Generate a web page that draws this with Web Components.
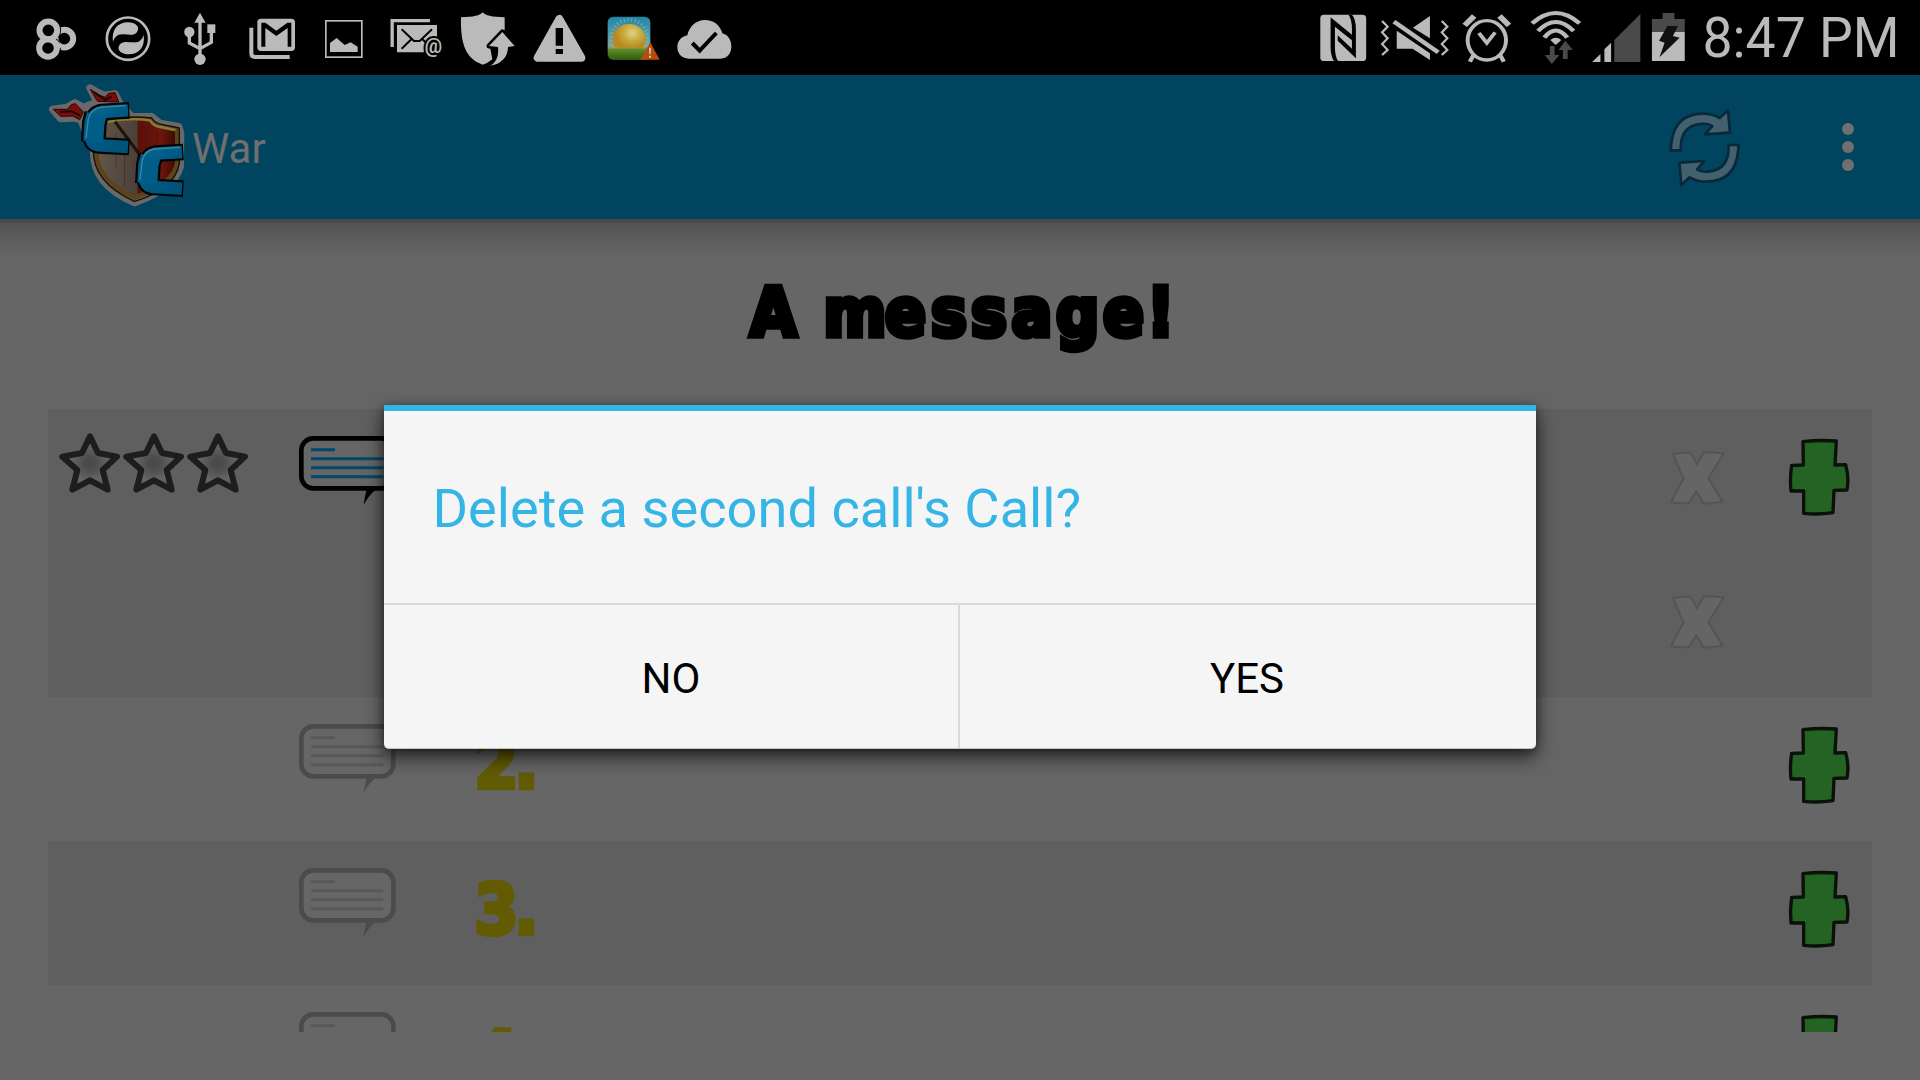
<!DOCTYPE html>
<html lang="en"><head><meta charset="utf-8"><title>War</title>
<style>
html,body{margin:0;height:100%;overflow:hidden;background:#666}
body{font-family:Roboto,sans-serif}
</style></head><body>
<war-app></war-app>
<script>
const G='#bababa', D='#4a4a4a';
const define=(name,html)=>customElements.define(name,class extends HTMLElement{
  constructor(){super();const t=document.createElement('template');t.innerHTML=typeof html==='function'?html(this):html;
  this.attachShadow({mode:'open'}).append(t.content.cloneNode(true));}
});

/* name: [viewBox, width, height, markup] */
const icons={
rings:['90 0 180 225',60,75,`<g fill="none" stroke="${G}" stroke-width="18"><circle cx="193" cy="116" r="26.500"/><circle cx="144" cy="144" r="31" stroke="#000" stroke-width="15"/><circle cx="144" cy="144" r="26.500"/><path d="M165 127L181 144" stroke-width="17"/><path d="M122 112A31 31 0 1 1 170 110" stroke="#000" stroke-width="14"/><circle cx="145" cy="91" r="26.500"/></g>`],
swirl:['270 0 230 225',76.667,75,`<g fill="${G}"><circle cx="384" cy="116" r="63.500" fill="none" stroke="${G}" stroke-width="8"/><path d="M339 126C334 90 352 67 384 67C406 67 419 80 413 92C407 107 390 105 372 103C352 101 343 112 339 126Z"/><path transform="rotate(180 385 115)" d="M339 126C334 90 352 67 384 67C406 67 419 80 413 92C407 107 390 105 372 103C352 101 343 112 339 126Z"/></g>`],
usb:['500 0 200 225',66.667,75,`<g fill="${G}"><path d="M599 38L616 68H582Z"/><circle cx="599" cy="178" r="17"/><circle cx="567" cy="96" r="15.500"/><path d="M621 73H645V99H621Z"/><path d="M599 64V180M567 100V129L599 146L633 127V97" fill="none" stroke="${G}" stroke-width="10"/></g>`],
mail:['700 0 230 225',76.667,75,`<path d="M755 83V160Q755 171 766 171H870" fill="none" stroke="${G}" stroke-width="12"/><rect x="773" y="56" width="113" height="97" rx="11" fill="${G}"/><path d="M785 140V68H797L830 92L863 68H875V140H864V84L830 108L797 84V140Z"/>`],
photo:['930 0 210 225',70,75,`<rect x="977.500" y="62.500" width="108" height="109" fill="none" stroke="${G}" stroke-width="5"/><path fill="${G}" d="M990 156V129L1010 114L1034 135L1052 127L1073 140V156Z"/>`],
letter:['30 0 210 225',70,75,`<path d="M66.500 141V62H180" fill="none" stroke="${G}" stroke-width="10"/><path fill="${G}" d="M81 75H201V157H81Z"/><path d="M95 88L132 123H149L186 88M95 146L124 118M157 118L175 134" fill="none" stroke="#000" stroke-width="6"/><text x="190" y="160" text-anchor="middle" font-family="Roboto" font-weight="700" font-size="58" fill="${G}" stroke="#000" stroke-width="12" paint-order="stroke">@</text>`],
shield:['240 0 220 225',73.333,75,`<path fill="${G}" d="M338 37Q348 51 404 52V90L360 140L367 178Q352 191 338 194C286 176 271 130 273 52Q328 51 338 37Z"/><path fill="${G}" stroke="#000" stroke-width="15" paint-order="stroke" stroke-linejoin="round" d="M397 96L434 138L414 141C414 170 395 192 362 197C382 182 386 165 384 141L357 138Z"/>`],
warn:['460 0 220 225',73.333,75,`<path fill="${G}" stroke="${G}" stroke-width="24" stroke-linejoin="round" d="M569 57L504 173H635Z"/><path d="M558 84H580V137H558ZM558 147H580V162H558Z"/>`],
sun:['680 0 210 225',70,75,`<defs><linearGradient id="a" x2="0" y2="1"><stop stop-color="#1f86a6"/><stop offset=".6" stop-color="#6ba4b0"/><stop offset=".7" stop-color="#94a37c"/><stop offset=".76" stop-color="#5f8a24"/><stop offset="1" stop-color="#2d5d12"/></linearGradient><radialGradient id="b" cx=".6" cy=".3"><stop stop-color="#ddd38a"/><stop offset=".55" stop-color="#c9a93c"/><stop offset="1" stop-color="#b98a1f"/></radialGradient><clipPath id="c"><path d="M713 40H850V147Q780 138 713 147Z"/></clipPath></defs><rect x="712" y="50" width="128" height="130" rx="17" fill="url(#a)"/><g clip-path="url(#c)"><circle cx="777" cy="112" r="53" fill="none" stroke="#a9c5b0" stroke-width="11" stroke-dasharray="4 7" opacity=".45"/><ellipse cx="776" cy="117" rx="50" ry="45" fill="url(#b)"/></g><path fill="#b84a0a" d="M840 127L868 179H810Z"/><path fill="#ccc" d="M836 143H842L841 163H837ZM836 167H842V173H836Z"/>`],
cloud:['890 0 220 225',73.333,75,`<path fill="${G}" d="M955 176H1050C1072 176 1083 160 1083 139C1083 118 1071 104 1056 100C1049 75 1030 60 1004 60C977 60 957 79 951 106C932 110 921 124 921 142C921 162 936 176 955 176Z"/><path d="M966 129L988 152L1038 99" fill="none" stroke="#000" stroke-width="12"/>`],
nfc:['30 0 155 225',61.29,75,`<rect x="51" y="44" width="116" height="139" rx="10" fill="${G}"/><path d="M77 52L131 104V121L88 80V140Q88 170 96 183H86Q77 170 77 140Z"/><path d="M122 44H131Q141 56 141 88V175L95 122V106L131 146V88Q131 56 122 44Z"/>`],
mute:['185 0 210 225',83.04,75,`<path d="M208 63L222 80L208 97L222 115L208 132L222 150L208 165M359 63L373 80L359 97L373 115L359 132L373 150L359 165" fill="none" stroke="${G}" stroke-width="6"/><path fill="${G}" d="M329 48V115L286 83ZM245 92L329 160V180L285 146H245Z"/><path d="M238 65L350 157" stroke="#000" stroke-width="24"/><path d="M238 65L350 157" stroke="${G}" stroke-width="12"/>`],
alarm:['395 0 165 225',65.24,75,`<g fill="none" stroke="${G}"><ellipse cx="473" cy="121" rx="48.500" ry="59" stroke-width="10"/><path stroke-width="15" d="M417 76L441 48M529 76L505 48"/><path stroke-width="11" d="M439 166L430 185M507 166L516 185"/><path stroke-width="10" d="M453 99L473 129L494 97"/></g>`],
wifi:['560 0 165 225',65.24,75,`<path d="M588 70Q648 8 708 70M603 93Q648 39 693 93M619 113Q648 70 677 113" fill="none" stroke="${G}" stroke-width="12"/><path fill="${G}" d="M634 120Q648 106 662 120L648 135Z"/><path fill="${D}" d="M633 138H645V165H657L638 192L620 165H633ZM666 177V150H655L672 122L691 150H678V177Z"/>`],
signal:['725 0 150 225',59.31,75,`<path fill="${G}" d="M738 186L759 162V186ZM769 186V148L786 128V186Z"/><path fill="${D}" d="M794 186V120L860 42V186Z"/>`],
battery:['875 0 125 225',49.43,75,`<path fill="${D}" d="M917 39H947V57H973V96H890V57H917Z"/><path fill="${G}" d="M890 96H973V183H890Z"/><path fill="#101010" d="M929 78H956L943 108L960 113L909 172L922 128L908 122Z"/>`],
logo:['54 15 420 432',140,144,`<defs><linearGradient id="w" x2="1" y2="0"><stop stop-color="#63564a"/><stop offset=".5" stop-color="#4b4039"/><stop offset=".52" stop-color="#5c1008"/><stop offset=".8" stop-color="#6c160b"/><stop offset="1" stop-color="#380805"/></linearGradient><linearGradient id="bl" gradientUnits="userSpaceOnUse" x1="155" y1="100" x2="300" y2="250"><stop stop-color="#166a91"/><stop offset=".4" stop-color="#005d87"/><stop offset="1" stop-color="#004f75"/></linearGradient></defs>
<g fill="#696969" stroke="#696969" stroke-width="22" stroke-linejoin="round"><path d="M180 54L205 68L222 76L255 72L268 98L305 140H365L390 160L446 170L452 190L451 290C440 330 395 370 313 398C225 360 190 310 190 240L152 148L130 144L92 146L68 118L110 112L135 98L160 112L202 96Z"/></g>
<path fill="#7c0b0b" stroke="#2a0404" stroke-width="3" d="M181 58L206 74L225 82L236 70L255 68L266 96L203 94L196 84ZM70 118L112 118L124 104L136 101L160 126L149 149L129 138L92 139Z"/>
<path d="M192 66L225 90L245 80M90 126L125 124L150 136" fill="none" stroke="#1c0807" stroke-width="6"/>
<path fill="url(#w)" stroke="#5d431b" stroke-width="14" stroke-linejoin="round" d="M228 156Q300 139 362 149Q372 166 392 169L442 178V275C438 320 390 358 313 383C225 343 197 290 199 240L215 160Z"/>
<path d="M228 151Q300 136 365 144Q375 160 395 163L448 174V280C440 330 395 370 313 394C222 353 188 300 190 238" fill="none" stroke="#15100a" stroke-width="4"/>
<path d="M232 156Q300 142 360 151Q370 168 392 171L436 180" fill="none" stroke="#8a7b36" stroke-width="7"/>
<path d="M347 165V235M382 180V215M258 190V290M284 250V350" stroke="#31150f" stroke-width="2" opacity=".6"/>
<path d="M255 155L330 255" stroke="#1d120c" stroke-width="9"/>
<g fill="none" stroke-linejoin="round"><g id="k"><path d="M298 121L215 126Q192 130 187 155L183 200Q184 222 205 226L298 231" stroke="#020507" stroke-width="50"/><path d="M200 132L193 160L190 216" stroke="#020507" stroke-width="74"/><path d="M294 121L215 126Q192 130 187 155L183 200Q184 222 205 226L294 231" stroke="url(#bl)" stroke-width="37"/><path d="M200 134L193 160L190 214" stroke="#005d87" stroke-width="60"/><path d="M288 107L210 112Q184 116 175 145L168 205" stroke="#3f87a3" stroke-width="4"/></g><use href="#k" transform="translate(162 125)"/></g>`],
refresh:['70 -15 270 432',90,144,`<g fill="#42606d" stroke="#09293a" stroke-width="8" stroke-linejoin="round"><path id="r" d="M93 211L95 190Q104 102 190 101Q218 101 240 114L265 91L271 158L196 163L218 138Q204 129 180 132Q130 138 124 190L123 211Z"/><use href="#r" transform="rotate(180 195 203)"/></g>`],
dots:['0 0 60 144',60,144,`<g fill="#6f6f6f"><circle cx="30" cy="54" r="6"/><circle cx="30" cy="72" r="6"/><circle cx="30" cy="90" r="6"/></g>`],
star:['79 57 192 330',64,110,`<defs><radialGradient id="g"><stop stop-color="#484848"/><stop offset=".25" stop-color="#4e4e4e"/><stop offset=".65" stop-color="#646464"/></radialGradient></defs><path fill="url(#g)" stroke="#1d1d1d" stroke-width="18" stroke-linejoin="round" d="M178 139L202 189L259 200L216 240L231 299L178 271L125 299L140 240L95 200L154 189Z"/>`],
bubble:['54 20 300 300',100,100,`<rect x="64" y="108" width="276" height="150" rx="36" fill="#666" stroke="var(--edge,#4b4b4b)" stroke-width="14"/><path d="M93 142H165M93 169H310M93 196H310M93 223H310" stroke="var(--line,#585858)" stroke-width="9"/><path fill="var(--edge,#4b4b4b)" d="M260 262H286Q266 280 251 307Q254 282 260 262Z"/>`],
plus:['430 27 220 330',73.333,110,`<path fill="#246323" stroke="#091109" stroke-width="10" stroke-linejoin="round" d="M490 125Q540 119 590 123L586 195L618 194Q629 235 622 270L583 271L580 338Q535 345 492 340L492 273L454 273Q450 235 456 196L491 195Z"/>`],
remove:['80 27 180 330',60,110,`<path fill="#656565" stroke="#545454" stroke-width="6" stroke-linejoin="round" d="M97 161L150 157L170 193L190 157Q222 156 250 161L204 235L247 306L190 311L168 273L146 309Q118 311 92 306L130 235Z"/>`]
};
define('ui-icon',el=>{const [v,w,h,m]=icons[el.getAttribute('name')];
return `<style>:host{display:block;flex:none;width:${w}px;height:${h}px}svg{display:block}</style><svg width="${w}" height="${h}" viewBox="${v}" preserveAspectRatio="none">${m}</svg>`});
const ic=n=>`<ui-icon name="${n}"></ui-icon>`;

define('status-bar',`<style>:host{display:flex;height:75px;background:#000;box-sizing:border-box;padding:0 20px 0 30px;color:#bababa}
div{display:flex}.sp{flex:1}.t{font-size:55.500px;line-height:77px;width:204.600px;white-space:nowrap;justify-content:flex-end;transform:scaleX(.965);transform-origin:100% 50%}</style>
<div>${['rings','swirl','usb','mail','photo','letter','shield','warn','sun','cloud'].map(ic).join('')}</div><div class="sp"></div>
<div>${['nfc','mute','alarm','wifi','signal','battery'].map(ic).join('')}</div><div class="t">8:47 PM</div>`);

define('action-bar',`<style>:host{display:flex;align-items:center;height:144px;background:#004460;padding:0 42px 0 48px;color:#6f6f6f;font-size:42px}
span{flex:1;padding:4px 0 0 4px;height:140px;line-height:140px}.gap{width:65px}</style>
${ic('logo')}<span><slot></slot></span>${ic('refresh')}<div class="gap"></div>${ic('dots')}`);

define('war-heading',`<style>:host{display:flex;justify-content:center;height:190px;background:linear-gradient(#484848 0,#484848 3px,#535353 4px,#5d5d5d 20px,#666 38px)}
svg{display:block}text{font:bold 67px "DejaVu Sans Condensed","DejaVu Sans",sans-serif;font-stretch:condensed;stroke:#000;stroke-width:5.500px}</style>
<svg width="480" height="190" viewBox="720 219 480 190"><text y="336" x="750 805 823.5 885 931 971 1011.5 1056 1103 1147">A message!</text></svg>`);

define('call-row',el=>{const n=el.getAttribute('number'),a=el.hasAttribute('active');
return `<style>:host{display:flex;height:144px;box-sizing:border-box;padding:0 15.300px 0 9.300px;background:var(--row,transparent);${a?'--edge:#020202;--line:#00496b':''}}
:host([active]){height:288px}.stars{display:flex;width:192px;margin-right:48.700px}.n{width:90px;height:144px;margin-left:78px}
.sp{flex:1}.x{display:flex;flex-direction:column;gap:34px;margin-right:56.700px}
text{font:bold 70px "DejaVu Sans Condensed","DejaVu Sans",sans-serif;font-stretch:condensed;fill:#625b04;stroke:#625b04;stroke-width:4.500px}svg{display:block}</style>
<div class="stars">${a?ic('star').repeat(3):''}</div>${ic('bubble')}<svg class="n" viewBox="476 0 90 144">${n?`<text y="${{'2.':90.5,'3.':93,'4.':94.5}[n]}" x="474.5 514.5">${n}</text>`:''}</svg><div class="sp"></div>
<div class="x">${a?ic('remove').repeat(2):''}</div>${ic('plus')}`});

define('call-list',`<style>:host{display:block;margin:0 48px;height:623px;overflow:hidden}</style><slot></slot>`);

define('confirm-dialog',`<style>:host{position:absolute;left:384px;top:405px;width:1152px;height:344px;box-sizing:border-box;display:flex;flex-direction:column;background:#f5f5f5;border-top:6px solid #35b5e5;border-bottom:1px solid #c4c4c4;border-radius:0 0 5px 5px;box-shadow:0 8px 20px rgba(0,0,0,.65),0 2px 9px rgba(0,0,0,.35)}
.h{height:188px;line-height:188px;padding:4px 0 0 48.500px;font-size:54.200px;color:#35b5e5;border-bottom:2px solid #d9d9d9}
.b{flex:1;display:flex;font-size:42px;color:#000}.b div{flex:1 1 0;box-sizing:border-box;display:flex;align-items:center;justify-content:center;padding-top:4px}.b div+div{border-left:2px solid #d9d9d9;padding-right:2px}</style>
<div class="h"><slot></slot></div><div class="b"><div><slot name="no"></slot></div><div><slot name="yes"></slot></div></div>`);

define('war-app',`<style>:host{display:block;position:relative;width:1920px;height:1080px;background:#666;overflow:hidden}.g{--row:#5f5f5f}</style>
<status-bar></status-bar><action-bar>War</action-bar><war-heading></war-heading>
<call-list><call-row class="g" active></call-row><call-row number="2."></call-row><call-row class="g" number="3."></call-row><call-row number="4."></call-row></call-list>
<confirm-dialog>Delete a second call's Call?<span slot="no">NO</span><span slot="yes">YES</span></confirm-dialog>`);
</script></body></html>
